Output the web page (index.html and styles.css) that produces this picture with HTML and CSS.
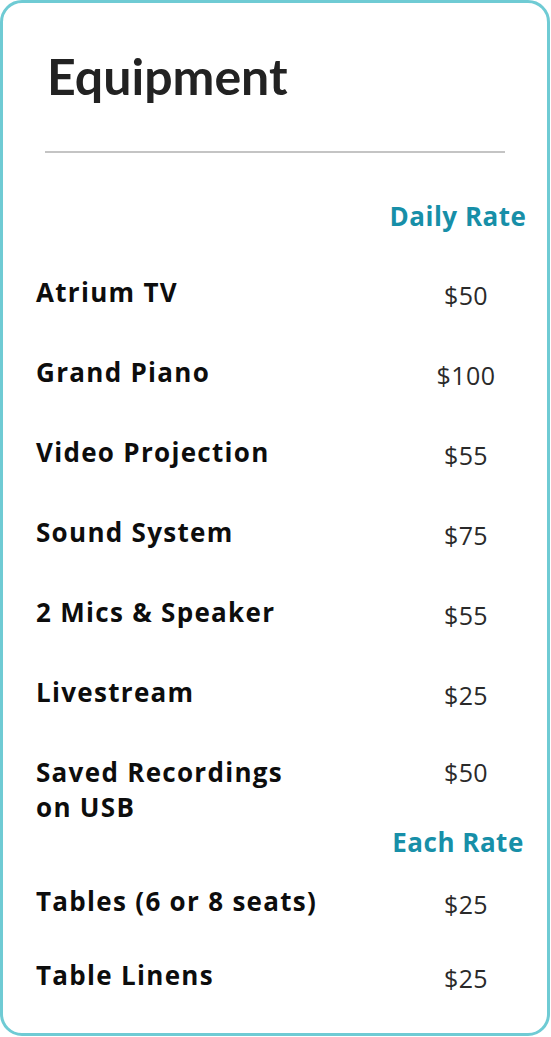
FILE: index.html
```html
<!DOCTYPE html>
<html lang="en">
<head>
<meta charset="utf-8">
<title>Equipment</title>
<link rel="stylesheet" href="styles.css">
</head>
<body>
<div class="card">
  <h1 class="title">Equipment</h1>
  <hr class="rule">

  <section class="section section--daily">
    <div class="head"><span class="head__label">Daily Rate</span></div>
    <div class="rows">
      <div class="row"><span class="row__name">Atrium TV</span><span class="row__price">$50</span></div>
      <div class="row"><span class="row__name">Grand Piano</span><span class="row__price">$100</span></div>
      <div class="row"><span class="row__name">Video Projection</span><span class="row__price">$55</span></div>
      <div class="row"><span class="row__name">Sound System</span><span class="row__price">$75</span></div>
      <div class="row"><span class="row__name">2 Mics &amp; Speaker</span><span class="row__price">$55</span></div>
      <div class="row"><span class="row__name">Livestream</span><span class="row__price">$25</span></div>
      <div class="row row--tall"><span class="row__name">Saved Recordings<br>on USB</span><span class="row__price">$50</span></div>
    </div>
  </section>

  <section class="section section--each">
    <div class="head"><span class="head__label">Each Rate</span></div>
    <div class="rows">
      <div class="row"><span class="row__name">Tables (6 or 8 seats)</span><span class="row__price">$25</span></div>
      <div class="row"><span class="row__name">Table Linens</span><span class="row__price">$25</span></div>
    </div>
  </section>
</div>
</body>
</html>
```

FILE: styles.css
```css
* { box-sizing: border-box; }

html, body {
  margin: 0;
  padding: 0;
  background: #ffffff;
}

.card {
  width: 550px;
  height: 1036px;
  border: 3px solid #6fcbd4;
  border-radius: 22px;
  padding: 45px 0 0 0;
  font-family: "Open Sans", "Liberation Sans", sans-serif;
  color: #111111;
}

.title {
  margin: 0 0 0 44px;
  font-family: Lato, "Open Sans", sans-serif;
  font-weight: 700;
  font-size: 50px;
  line-height: 56px;
  letter-spacing: 0;
  color: #222222;
}

.rule {
  margin: 47px 42px 0 42px;
  border: 0;
  height: 2px;
  background: #c4c4c4;
}

.section--daily { margin-top: 46px; }
.section--each { margin-top: 0; }

.head {
  display: grid;
  grid-template-columns: 1fr 150px;
  padding-right: 14px;
}

.head__label {
  grid-column: 2;
  text-align: center;
  font-size: 26px;
  line-height: 35px;
  font-weight: 700;
  letter-spacing: 0.5px;
  color: #178fa8;
  white-space: nowrap;
}

.rows {
  display: flex;
  flex-direction: column;
}

.section--daily .rows { margin-top: 41px; gap: 42px; }
.section--each .rows { margin-top: 24px; gap: 36px; }

.row {
  display: grid;
  grid-template-columns: 1fr 92px;
  padding: 0 35px 0 33px;
  align-items: start;
}

.row__name {
  font-size: 26px;
  line-height: 35px;
  font-weight: 700;
  letter-spacing: 1.3px;
  color: #0d0d0d;
  white-space: nowrap;
}

.row__price {
  text-align: center;
  font-size: 25px;
  line-height: 35px;
  font-weight: 400;
  letter-spacing: 0.4px;
  color: #2a2a2a;
  padding-top: 3px;
}

.row--tall .row__price { padding-top: 0; }
```
